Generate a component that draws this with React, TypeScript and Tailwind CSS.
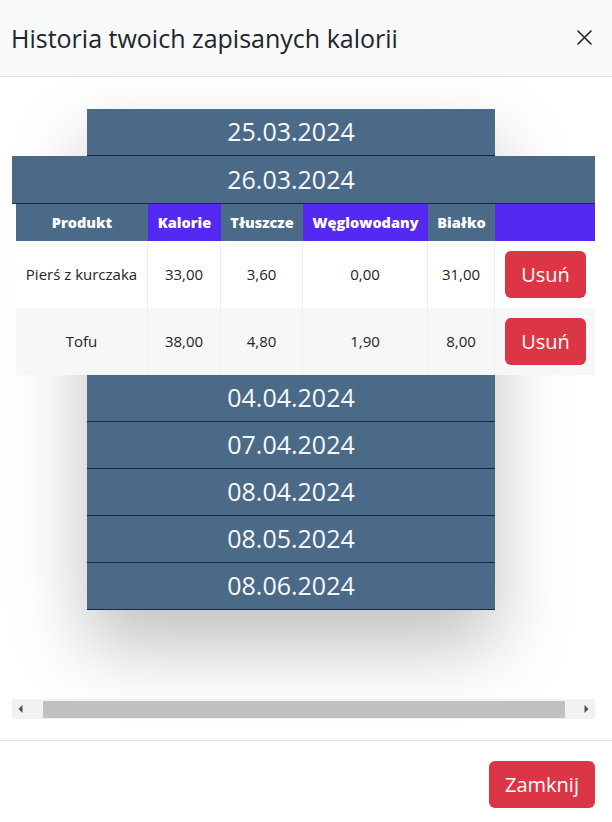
import React from "react";

const before = ["25.03.2024"];
const after = ["04.04.2024", "07.04.2024", "08.04.2024", "08.05.2024", "08.06.2024"];

const rows = [
  { name: "Pierś z kurczaka", kcal: "33,00", fat: "3,60", carbs: "0,00", prot: "31,00", bg: "bg-white" },
  { name: "Tofu", kcal: "38,00", fat: "4,80", carbs: "1,90", prot: "8,00", bg: "bg-[#f7f7f7]" },
];

function DateRow({ d }: { d: string }) {
  return (
    <div className="h-[47px] bg-[#4a6a88] border-b border-[#132a42] flex items-center justify-center text-[25px] text-[#f8f9fa]">
      {d}
    </div>
  );
}

export default function App() {
  return (
    <div className="w-[612px] h-[822px] bg-white flex flex-col font-['Open_Sans',sans-serif] text-[#212529]">
      <div className="h-[77px] shrink-0 bg-[#f8f9fa] border-b border-[#dee2e6] flex items-center justify-between pl-[11px] pr-[20px]">
        <h1 className="text-[25px] leading-none">Historia twoich zapisanych kalorii</h1>
        <svg width="15" height="15" viewBox="0 0 15 15" className="mb-[1px]">
          <path d="M1 1 L14 14 M14 1 L1 14" stroke="#212529" strokeWidth="1.6" strokeLinecap="round" />
        </svg>
      </div>

      <div className="h-[663px] shrink-0 flex flex-col pl-[12px] pr-[17px] pt-[32px] pb-[21px]">
        <div className="flex-1">
          <div className="ml-[75px] w-[408px] shadow-[0_35px_70px_rgba(0,0,0,0.25)] bg-white">
            {before.map((d) => (
              <DateRow key={d} d={d} />
            ))}
            <div className="-ml-[75px] -mr-[100px] h-[48px] bg-[#4a6a88] border-b border-[#132a42] flex items-center justify-center pr-[25px] text-[25px] text-[#f8f9fa]">
              26.03.2024
            </div>
            <div className="-ml-[71px] -mr-[100px] grid grid-cols-[132px_73px_82px_125px_67px_100px]">
              <div className="h-[37px] bg-[#4a6a88] flex items-center justify-center text-[14.5px] font-extrabold text-white">Produkt</div>
              <div className="h-[37px] bg-[#5629f2] flex items-center justify-center text-[14.5px] font-extrabold text-white">Kalorie</div>
              <div className="h-[37px] bg-[#4a6a88] flex items-center justify-center text-[14.5px] font-extrabold text-white">Tłuszcze</div>
              <div className="h-[37px] bg-[#5629f2] flex items-center justify-center text-[14.5px] font-extrabold text-white">Węglowodany</div>
              <div className="h-[37px] bg-[#4a6a88] flex items-center justify-center text-[14.5px] font-extrabold text-white">Białko</div>
              <div className="h-[37px] bg-[#5629f2]" />
              {rows.map((r) => (
                <React.Fragment key={r.name}>
                  <div className={`h-[67px] ${r.bg} border-r border-[#efefef] flex items-center justify-center text-[15px]`}>{r.name}</div>
                  <div className={`h-[67px] ${r.bg} border-r border-[#efefef] flex items-center justify-center text-[15px]`}>{r.kcal}</div>
                  <div className={`h-[67px] ${r.bg} border-r border-[#efefef] flex items-center justify-center text-[15px]`}>{r.fat}</div>
                  <div className={`h-[67px] ${r.bg} border-r border-[#efefef] flex items-center justify-center text-[15px]`}>{r.carbs}</div>
                  <div className={`h-[67px] ${r.bg} border-r border-[#efefef] flex items-center justify-center text-[15px]`}>{r.prot}</div>
                  <div className={`h-[67px] ${r.bg} flex items-center pl-[10px]`}>
                    <button className="w-[81px] h-[47px] rounded-[6px] bg-[#dc3545] text-white text-[20px] flex items-center justify-center">
                      Usuń
                    </button>
                  </div>
                </React.Fragment>
              ))}
            </div>
            {after.map((d) => (
              <DateRow key={d} d={d} />
            ))}
          </div>
        </div>

        <div className="h-[20px] bg-[#f1f1f1] flex items-center">
          <div className="w-[17px] flex justify-center">
            <svg width="5" height="8" viewBox="0 0 5 8">
              <path d="M4.5 0 L0.5 4 L4.5 8 Z" fill="#505050" />
            </svg>
          </div>
          <div className="ml-[14px] w-[522px] h-[17px] bg-[#c1c1c1]" />
          <div className="ml-[13px] w-[17px] flex justify-center">
            <svg width="5" height="8" viewBox="0 0 5 8">
              <path d="M0.5 0 L4.5 4 L0.5 8 Z" fill="#505050" />
            </svg>
          </div>
        </div>
      </div>

      <div className="flex-1 border-t border-[#dee2e6] flex justify-end items-start pt-[20px] pr-[17px]">
        <button className="w-[106px] h-[47px] rounded-[6px] bg-[#dc3545] text-white text-[20px] flex items-center justify-center">
          Zamknij
        </button>
      </div>
    </div>
  );
}
